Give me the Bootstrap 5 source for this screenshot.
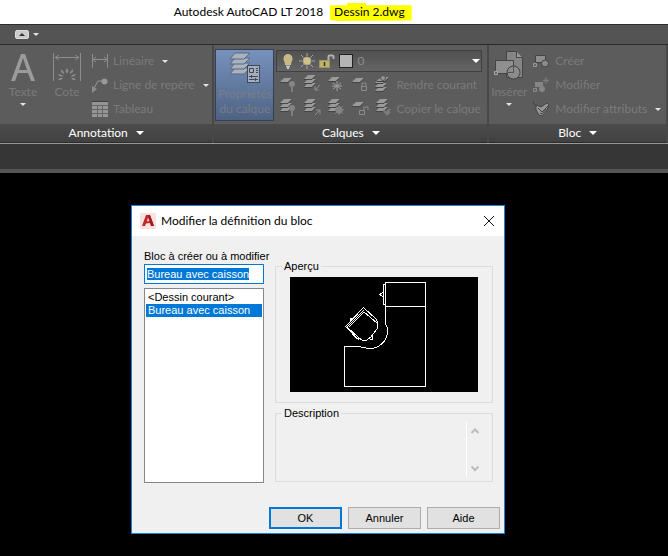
<!DOCTYPE html>
<html lang="fr">
<head>
<meta charset="utf-8">
<meta name="viewport" content="width=device-width, initial-scale=1">
<title>Autodesk AutoCAD LT 2018 - Dessin 2.dwg</title>
<link rel="stylesheet" href="https://cdn.jsdelivr.net/npm/bootstrap@5.3.0/dist/css/bootstrap.min.css">
<style>
body { background: #000; font: 12px/16px Lato, "Open Sans", sans-serif; color: #000; }
button { font: inherit; color: inherit; }
svg { display: block; flex: none; }
.app-title { height: 24px; padding-left: 26%; background: #fff; }
.file-name { padding: 1px 7px 1px 4px; margin-left: 7px; background: #ff0;
  clip-path: polygon(0 12%, 21% 12%, 21% 0, 44% 0, 44% 12%, 100% 12%, 100% 97%, 10% 100%, 0 94%); }
.tab-strip { height: 21px; padding-left: 15px; background: #545454; border-top: 1px solid #2c2c2c; border-bottom: 1px solid #2c2c2c; }
.strip-btn { background: none; border: 0; padding: 0; }
.ribbon { background: #5c5c5c; border-bottom: 1px solid #979797; color: #7b7b7b; }
.panel { border-right: 2px solid #484848; min-width: 0; }
.panel-annotation { flex: 214 1 0; }
.panel-layers { flex: 275 1 0; }
.panel-block { flex: 178 1 0; }
.panel-tools { height: 79px; padding-top: 4px; }
.panel-name { height: 19px; background: linear-gradient(#4c4c4c, #414141); border: 0; border-bottom: 1px solid #2c2c2c; color: #fff; }
.tool { height: 24px; padding: 0; border: 0; background: none; text-align: left; white-space: nowrap; }
.tool-label { margin-left: 5px; }
.big-tool { padding: 3px 0 0; border: 0; background: none; line-height: 15px; }
.tool-text { width: 46px; }
.tool-dim { width: 42px; }
.tool-insert { width: 40px; padding-top: 1px; }
.tool-props { width: 59px; height: 72px; margin: 0 2px 0 1px; padding: 2px 0 0; background: linear-gradient(#7792bd, #4e6283); border: 1px solid #343f55; color: #787e88; line-height: 15px; }
.caret-down { width: 0; height: 0; border: 3px solid transparent; border-top-color: #e4e4e4; border-bottom: 0; }
.caret-lg { border-width: 4px; border-top-color: #fff; border-bottom: 0; }
.icon-cell { width: 24px; height: 24px; padding: 0; border: 0; background: none; }
.layer-box { height: 22px; margin: 1px 5px 1px 0; padding: 0 1px 0 4px; background: linear-gradient(#505050, #656565); border: 1px solid #404040; }
.layer-select { appearance: none; border: 0; background: none; color: #8c8c8c; padding: 0; min-width: 0; }
.swatch { width: 14px; height: 14px; background: #b4b4b4; border: 1px solid #222; }
.doc-strip { height: 29px; background: #363636; border-bottom: 4px solid #555; }
.workspace { padding: 32px 0 22px 131px; }
.edit-dialog { max-width: 374px; background: #f0f0f0; border: 1px solid #1883d7; font: 11px/14px "Liberation Sans", Arial, sans-serif; }
.dialog-head { height: 30px; padding: 0 9px 0 8px; background: #fff; font: 12px/16px Lato, "Open Sans", sans-serif; }
.close-x { padding: 0; border: 0; background: none; }
.dialog-main { padding: 13px 11px 0 12px; gap: 11px; }
.name-col { flex: 120 1 0; min-width: 0; }
.info-col { flex: 218 1 0; min-width: 0; padding-top: 10px; }
.name-input { height: 20px; width: 100%; margin-top: 1px; padding: 0 2px; border: 1px solid #0078d7; outline: 0; background: #fff; line-height: 14px; }
.name-input::selection { background: #0078d7; color: #fff; }
.name-list { height: 195px; width: 100%; margin-top: 4px; padding: 2px 1px; border: 1px solid #828790; background: #fff; outline: 0; overflow: hidden; border-radius: 0; }
.name-list option { padding: 0 2px; min-height: 13px; line-height: 13px; }
.name-list option:checked { background: #0078d7 linear-gradient(#0078d7, #0078d7); color: #fff; }
.group { border: 1px solid #dcdcdc; }
.group legend { float: none; width: auto; margin: 0; padding: 0 2px; font-size: 11px; line-height: 14px; }
.group-preview { padding: 0 14px 10px 6px; }
.preview-frame { margin-left: 8px; }
.preview-frame svg { width: 100%; height: auto; background: #000; margin-top: 4px; }
.group-desc { margin-top: 3px; padding: 0 9px 4px 6px; }
.desc-area { height: 55px; padding-right: 4px; margin-top: 2px; }
.desc-text { resize: none; border: 0; border-right: 1px solid #fff; background: none; }
.dialog-foot { padding: 24px 4px 4px; gap: 6px; }
.dlg-btn { width: 73px; height: 22px; padding: 0; background: #e1e1e1; border: 1px solid #adadad; }
.dlg-btn-main { border: 2px solid #0078d7; }
</style>
</head>
<body>
<svg width="0" height="0" class="position-absolute" aria-hidden="true">
  <defs>
    <g id="sheet"><path d="M4 0h8l-4 4H0z" fill="#9a9a9a"/><path d="M0 4.5h8l4-4" fill="none" stroke="#444"/></g>
    <g id="stack"><use href="#sheet" y="8"/><use href="#sheet" y="4"/><use href="#sheet"/></g>
    <g id="pin"><circle cx="3" cy="3" r="3" fill="#858585"/><path d="M3 6v5" stroke="#808080" stroke-width="2"/></g>
    <g id="sunny"><circle cx="5" cy="5" r="3.5" fill="#848484"/><path d="M5 0v10M0 5h10M1 1l8 8M9 1 1 9" stroke="#848484"/></g>
  </defs>
</svg>

<header class="app-title d-flex align-items-center text-nowrap">
  <span>Autodesk AutoCAD LT 2018</span><span class="file-name">Dessin 2.dwg</span>
</header>

<div class="tab-strip d-flex align-items-center">
  <button class="strip-btn d-flex align-items-center" aria-label="Réduire le ruban">
    <svg width="14" height="9" viewBox="0 0 14 9"><rect x=".5" y=".5" width="13" height="8" rx="1.5" fill="#c9cacc" stroke="#dedede"/><path d="M4 6h6L7 3z" fill="#333"/></svg>
    <span class="caret-down ms-1"></span>
  </button>
</div>

<section class="ribbon d-flex" aria-label="Ruban">
  <div class="panel panel-annotation">
    <div class="panel-tools d-flex">
      <button class="big-tool tool-text d-flex flex-column align-items-center">
        <svg width="26" height="32" viewBox="0 0 26 32"><path d="M1 29 11 2h4l10 27h-4l-3-8H8l-3 8zM9 18h8L13 6z" fill="#9b9b9b"/></svg>
        <span>Texte</span><span class="caret-down mt-1"></span>
      </button>
      <button class="big-tool tool-dim d-flex flex-column align-items-center">
        <svg width="28" height="32" viewBox="0 0 28 32"><path d="M.5 1v28M27.500 1v28M2 5.500h24M6 3 2 5.500l4 2.500M22 3l4 2.500-4 2.500" fill="none" stroke="#8d8d8d"/><path d="m14 16 1.500 3-1.500 3-1.500-3zM8 17l3 3v2l-3-2zM20 17l-3 3v2l3-2zM5 22l4 1 1 2-4-1zM23 22l-4 1-1 2 4-1zM5 28l2-2h3l-2 2zM23 28l-2-2h-3l2 2z" fill="#8b8b8b"/></svg>
        <span>Cote</span>
      </button>
      <div class="d-flex flex-column ps-1 flex-fill">
        <button class="tool d-flex align-items-center">
          <svg width="16" height="16" viewBox="0 0 16 16"><path d="M.5 1v14M15.500 1v14M1 6.500h14M4 4 1 6.500 4 9M12 4l3 2.500L12 9" fill="none" stroke="#8d8d8d"/></svg>
          <span class="tool-label">Linéaire</span><span class="caret-down ms-2"></span>
        </button>
        <button class="tool d-flex align-items-center">
          <svg width="16" height="16" viewBox="0 0 16 16"><path d="M1 13 6 4h6" fill="none" stroke="#979797"/><path d="M0 9v7l5-4z" fill="#8d8d8d"/><circle cx="12.500" cy="4.500" r="3" fill="#999"/></svg>
          <span class="tool-label">Ligne de repère</span><span class="caret-down ms-2"></span>
        </button>
        <button class="tool d-flex align-items-center">
          <svg width="16" height="16" viewBox="0 0 16 16"><path d="M0 1h16v15H0z" fill="#959595"/><path d="M0 .5h16" stroke="#3f3f3f"/><path d="M0 4.500h16M0 8.500h16M0 12.500h16M5.500 4v12M10.500 4v12" stroke="#666"/></svg>
          <span class="tool-label">Tableau</span>
        </button>
      </div>
    </div>
    <button class="panel-name w-100 d-flex justify-content-center align-items-center">Annotation<span class="caret-down caret-lg ms-2"></span></button>
  </div>

  <div class="panel panel-layers">
    <div class="panel-tools d-flex">
      <button class="tool-props d-flex flex-column align-items-center">
        <svg width="32" height="34" viewBox="0 0 32 34"><g fill="#aab2bd" stroke="#566985"><path d="M6 16h15l-6 6H1z"/><path d="M6 11h15l-6 6H1z"/><path d="M6 6h15l-6 6H1z"/><path d="M6 1h15l-6 6H1z"/></g><rect x="18.500" y="13.500" width="12" height="17" fill="#a5adb8" stroke="#3c4a61"/><path d="M20.500 16.500h4v4h-4zM27 16.500h2M27 18.500h2M27 20.500h2M20 24.500h9M20 27.500h9M22.500 23v3M26.500 26v3" fill="none" stroke="#3c4a61"/></svg>
        <span>Propriétés</span><span>du calque</span>
      </button>
      <div class="flex-fill">
        <div class="layer-box d-flex align-items-center">
          <svg width="14" height="17" viewBox="0 0 14 17"><path d="M4 12C4 9 2.500 8 2.500 5.500a4.500 4.500 0 0 1 9 0C11.500 8 10 9 10 12z" fill="#c5ba83"/><path d="M5 12.500h4v2H8V16H6v-1.500H5z" fill="#bfc5c9"/></svg>
          <svg class="ms-1" width="16" height="16" viewBox="0 0 16 16"><path d="M8 0v3M8 13v3M0 8h3M13 8h3M2 2l2.500 2.500M11.500 11.500 14 14M14 2l-2.500 2.500M4.500 11.500 2 14" stroke="#a5a7a8"/><circle cx="8" cy="8" r="4" fill="#d0c28b" stroke="#aaa37f"/></svg>
          <svg class="ms-1" width="16" height="16" viewBox="0 0 16 16"><path d="M9.500 7V3.500q0-1 1-1h3q1 0 1 1V6" fill="none" stroke="#aeb1b3" stroke-width="2"/><rect x=".5" y="7.500" width="10" height="7" fill="#c0b16d" stroke="#9e945f"/><path d="M5.500 9v4" stroke="#333" stroke-width="1.500"/></svg>
          <span class="swatch ms-1"></span>
          <select class="layer-select flex-fill ms-1" aria-label="Calque courant"><option>0</option></select>
          <span class="caret-down caret-lg"></span>
        </div>
        <div class="d-flex">
          <button class="icon-cell" aria-label="Désactiver"><svg width="24" height="24"><use href="#sheet" x="4" y="5"/><use href="#pin" x="13" y="8"/></svg></button>
          <button class="icon-cell" aria-label="Isoler"><svg width="24" height="24"><use href="#stack" x="4" y="2"/><path d="m20 12-5 5v-4m0 4h4" fill="none" stroke="#8c8c8c"/></svg></button>
          <button class="icon-cell" aria-label="Geler"><svg width="24" height="24"><use href="#sheet" x="4" y="4"/><path d="M13 8v10M9 10l8 6M17 10l-8 6M8 13h10" stroke="#a0a0a0"/></svg></button>
          <button class="icon-cell" aria-label="Verrouiller"><svg width="24" height="24"><use href="#sheet" x="4" y="5"/><path d="M14 13v-3h4v3M13.500 13.500h5v4h-5z" fill="none" stroke="#8c8c8c"/></svg></button>
          <button class="tool d-flex align-items-center"><svg width="24" height="24"><g transform="translate(3 6)"><use href="#stack"/><use href="#sheet" x="2" y="-2"/></g><circle cx="11" cy="5" r="2.500" fill="#949494" stroke="#555"/></svg><span>Rendre courant</span></button>
        </div>
        <div class="d-flex">
          <button class="icon-cell" aria-label="Activer tous"><svg width="24" height="24"><use href="#stack" x="4" y="2"/><use href="#pin" x="13" y="8"/></svg></button>
          <button class="icon-cell" aria-label="Annuler l'isolation"><svg width="24" height="24"><use href="#stack" x="4" y="2"/><path d="m15 18 5-5v4m0-4h-4" fill="none" stroke="#8c8c8c"/></svg></button>
          <button class="icon-cell" aria-label="Libérer tous"><svg width="24" height="24"><use href="#stack" x="4" y="2"/><use href="#sunny" x="10" y="8"/></svg></button>
          <button class="icon-cell" aria-label="Déverrouiller"><svg width="24" height="24"><use href="#sheet" x="4" y="5"/><path d="M16 13v-3h4v3M11.500 13.500h5v4h-5z" fill="none" stroke="#8c8c8c"/></svg></button>
          <button class="tool d-flex align-items-center"><svg width="24" height="24"><use href="#stack" x="4" y="2"/><path d="m11 13 3 3 4-4M14 18l4-3" fill="none" stroke="#7b7b7b" stroke-width="2"/></svg><span>Copier le calque</span></button>
        </div>
      </div>
    </div>
    <button class="panel-name w-100 d-flex justify-content-center align-items-center">Calques<span class="caret-down caret-lg ms-2"></span></button>
  </div>

  <div class="panel panel-block">
    <div class="panel-tools d-flex">
      <button class="big-tool tool-insert d-flex flex-column align-items-center">
        <svg width="32" height="34" viewBox="0 0 32 34"><path d="M13.500 1.500h10l6 6v20h-16z" fill="#858585" stroke="#444"/><path d="M23.500 1.500v6h6" fill="#999" stroke="#444"/><path d="M2.500 10.500h18v13h-18z" fill="#8f8f8f" stroke="#444"/><circle cx="20.500" cy="22.500" r="6.500" fill="#8c8c8c" stroke="#444"/><path d="M14 22.500h6.500V16" fill="none" stroke="#555"/><path d="M1.500 21.500h3v3h-3z" fill="#666" stroke="#aaa"/></svg>
        <span>Insérer</span><span class="caret-down mt-1"></span>
      </button>
      <div class="d-flex flex-column ps-1 flex-fill">
        <button class="tool d-flex align-items-center">
          <svg width="17" height="16" viewBox="0 0 17 16"><path d="M2.500 2.500h10v7h-10z" fill="#8e8e8e" stroke="#444"/><circle cx="12" cy="10.500" r="3.500" fill="#8a8a8a" stroke="#444"/><path d="M.5 10.500h3v3h-3z" fill="#666" stroke="#999"/></svg>
          <span class="tool-label">Créer</span>
        </button>
        <button class="tool d-flex align-items-center">
          <svg width="17" height="16" viewBox="0 0 17 16"><path d="M2 5h8v5H2z" fill="#858585"/><circle cx="9" cy="12" r="3" fill="#858585"/><path d="M.5 11.500h3v3h-3z" fill="#666" stroke="#888"/><path d="M13 0v7M10 3.500h6M11 1.500l4 4M15 1.500l-4 4" stroke="#7b7b7b"/></svg>
          <span class="tool-label">Modifier</span>
        </button>
        <button class="tool d-flex align-items-center">
          <svg width="17" height="16" viewBox="0 0 17 16"><path d="M.5 0v3l3 2" fill="none" stroke="#444"/><path d="m3 4 5 2 6-4 2 2-2 5-5 6-3-1-3-5z" fill="#959595" stroke="#444"/><path d="m5 7 4 4 6-6M7 12l2 1 4-5" fill="none" stroke="#444"/></svg>
          <span class="tool-label">Modifier attributs</span><span class="caret-down ms-2"></span>
        </button>
      </div>
    </div>
    <button class="panel-name w-100 d-flex justify-content-center align-items-center">Bloc<span class="caret-down caret-lg ms-2"></span></button>
  </div>
</section>
<div class="doc-strip"></div>

<main class="workspace">
  <form class="edit-dialog" role="dialog" aria-labelledby="dlgTitle" onsubmit="return false">
    <div class="dialog-head d-flex align-items-center">
      <svg width="16" height="16" viewBox="0 0 16 16"><path d="M0 0h16v16H0z" fill="#f6e3e1"/><path d="M2 13 6 2h4l4 11h-3l-1-3-4 .5-1 2.500zM7 8.500l2.500-.5L8 4.500z" fill="#c5262d"/><path d="M8 2h2l4 11h-3z" fill="#a61920"/></svg>
      <span id="dlgTitle" class="tool-label flex-fill">Modifier la définition du bloc</span>
      <button type="button" class="close-x" aria-label="Fermer"><svg width="12" height="12" viewBox="0 0 12 12"><path d="m1 1 10 10M11 1 1 11" stroke="#111"/></svg></button>
    </div>
    <div class="dialog-main d-flex">
      <div class="name-col">
        <label for="blockName" class="d-block text-nowrap">Bloc à créer ou à modifier</label>
        <input id="blockName" class="name-input d-block" type="text" value="Bureau avec caisson">
        <select class="name-list d-block" size="12" aria-label="Blocs du dessin">
          <option>&lt;Dessin courant&gt;</option>
          <option selected>Bureau avec caisson</option>
        </select>
      </div>
      <div class="info-col">
        <fieldset class="group group-preview">
          <legend>Aperçu</legend>
          <div class="preview-frame">
            <svg viewBox="0 0 188 115" role="img" aria-label="Bureau avec caisson" fill="none" stroke="#fff" shape-rendering="crispEdges">
              <path d="M54.500 69.500H69Q76 72 84 71C92 69 97.500 62 97.500 54.500Q97.500 50 95.500 46.500V5.500h40v104h-81zM95.500 29.500h40M95.500 7.500h-2v20h2M93 15l-3 2.500 3 2.500"/>
              <path d="M73.500 30.500 55.500 49.500l12 12.500M73.500 30.500 86 42M74 33 57 50l12 11 3 2h5l4-3 6-8v-6L74 35 59 50M60 43v-2h2M68 63v-3M80 62h2v-3M86 42l2 4"/>
            </svg>
          </div>
        </fieldset>
        <fieldset class="group group-desc">
          <legend><label for="blockDesc">Description</label></legend>
          <div class="desc-area d-flex">
            <textarea id="blockDesc" class="desc-text flex-fill" readonly></textarea>
            <div class="d-flex flex-column justify-content-between py-1 ps-1">
              <svg width="8" height="10" viewBox="0 0 8 10"><path d="M.5 7 4 3.500 7.500 7" fill="none" stroke="#bcbcbc" stroke-width="2"/></svg>
              <svg width="8" height="10" viewBox="0 0 8 10"><path d="M.5 3.500 4 7l3.500-3.500" fill="none" stroke="#bcbcbc" stroke-width="2"/></svg>
            </div>
          </div>
        </fieldset>
      </div>
    </div>
    <div class="dialog-foot d-flex justify-content-end">
      <button type="submit" class="dlg-btn dlg-btn-main">OK</button>
      <button type="button" class="dlg-btn">Annuler</button>
      <button type="button" class="dlg-btn">Aide</button>
    </div>
  </form>
</main>
<script src="https://cdn.jsdelivr.net/npm/bootstrap@5.3.0/dist/js/bootstrap.bundle.min.js"></script>
<script>
const blockName = document.getElementById('blockName');
blockName.focus();
blockName.select();
</script>
</body>
</html>
